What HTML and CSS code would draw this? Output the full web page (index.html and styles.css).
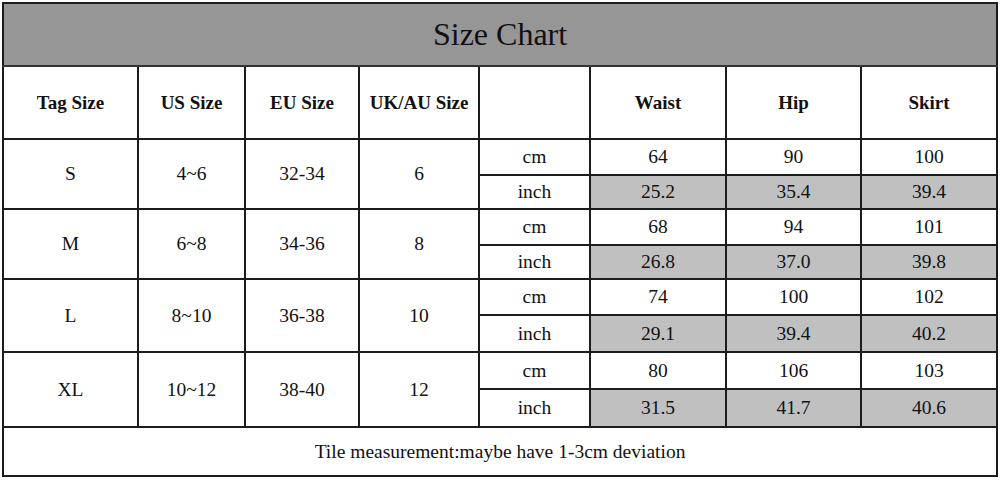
FILE: index.html
```html
<!DOCTYPE html>
<html>
    <head>
        <title>Size Chart</title>
        <link rel="stylesheet" href="styles.css">
    </head>
    <body>
        <table class="size_table">
            <colgroup>
                <col class="c_tag">
                <col class="c_us">
                <col class="c_eu">
                <col class="c_uk">
                <col class="c_unit">
                <col class="c_waist">
                <col class="c_hip">
                <col class="c_skirt">
            </colgroup>
            <tr class="title_row">
                <td colspan="8">Size Chart</td>
            </tr>
            <tr class="table_head">
                <th>Tag Size</th>
                <th>US Size</th>
                <th>EU Size</th>
                <th>UK/AU Size</th>
                <th></th>
                <th>Waist</th>
                <th>Hip</th>
                <th>Skirt</th>
            </tr>
            <!-- S -->
            <tr class="cm_row r36">
                <td rowspan="2">S</td>
                <td rowspan="2">4~6</td>
                <td rowspan="2">32-34</td>
                <td rowspan="2">6</td>
                <td>cm</td>
                <td>64</td>
                <td>90</td>
                <td>100</td>
            </tr>
            <tr class="inch_row r34">
                <td>inch</td>
                <td class="grey">25.2</td>
                <td class="grey">35.4</td>
                <td class="grey">39.4</td>
            </tr>
            <!-- M -->
            <tr class="cm_row r36">
                <td rowspan="2">M</td>
                <td rowspan="2">6~8</td>
                <td rowspan="2">34-36</td>
                <td rowspan="2">8</td>
                <td>cm</td>
                <td>68</td>
                <td>94</td>
                <td>101</td>
            </tr>
            <tr class="inch_row r34">
                <td>inch</td>
                <td class="grey">26.8</td>
                <td class="grey">37.0</td>
                <td class="grey">39.8</td>
            </tr>
            <!-- L -->
            <tr class="cm_row r36">
                <td rowspan="2">L</td>
                <td rowspan="2">8~10</td>
                <td rowspan="2">36-38</td>
                <td rowspan="2">10</td>
                <td>cm</td>
                <td>74</td>
                <td>100</td>
                <td>102</td>
            </tr>
            <tr class="inch_row r37">
                <td>inch</td>
                <td class="grey">29.1</td>
                <td class="grey">39.4</td>
                <td class="grey">40.2</td>
            </tr>
            <!-- XL -->
            <tr class="cm_row r37">
                <td rowspan="2">XL</td>
                <td rowspan="2">10~12</td>
                <td rowspan="2">38-40</td>
                <td rowspan="2">12</td>
                <td>cm</td>
                <td>80</td>
                <td>106</td>
                <td>103</td>
            </tr>
            <tr class="inch_row r38">
                <td>inch</td>
                <td class="grey">31.5</td>
                <td class="grey">41.7</td>
                <td class="grey">40.6</td>
            </tr>
            <tr class="note_row">
                <td colspan="8">Tile measurement:maybe have 1-3cm deviation</td>
            </tr>
        </table>
    </body>
</html>
```

FILE: styles.css
```css
body{
    margin: 0;
    padding: 2px;
    background: #ffffff;
    font-family: "Liberation Serif", "Times New Roman", serif;
    color: #111111;
}
.size_table{
    border-collapse: collapse;
    table-layout: fixed;
    width: 996px;
    border: 2px solid #333333;
}
.c_tag{ width: 135px; }
.c_us{ width: 107px; }
.c_eu{ width: 114px; }
.c_uk{ width: 120px; }
.c_unit{ width: 111px; }
.c_waist{ width: 136px; }
.c_hip{ width: 135px; }
.c_skirt{ width: 136px; }
td, th{
    border: 2px solid #1c1c1c;
    padding: 0;
    text-align: center;
    vertical-align: middle;
    font-size: 19.5px;
    font-weight: normal;
}
th{
    font-weight: bold;
    font-size: 19px;
}
.title_row td{
    height: 61px;
    background: #969696;
    font-size: 32px;
    border-bottom-color: #333333;
}
.table_head th{
    height: 71px;
}
.r34 td{ height: 32px; }
.r36 td{ height: 34px; }
.r37 td{ height: 35px; }
.r38 td{ height: 36px; }
.grey{
    background: #c0c0c0;
}
.note_row td{
    height: 47px;
}
```
